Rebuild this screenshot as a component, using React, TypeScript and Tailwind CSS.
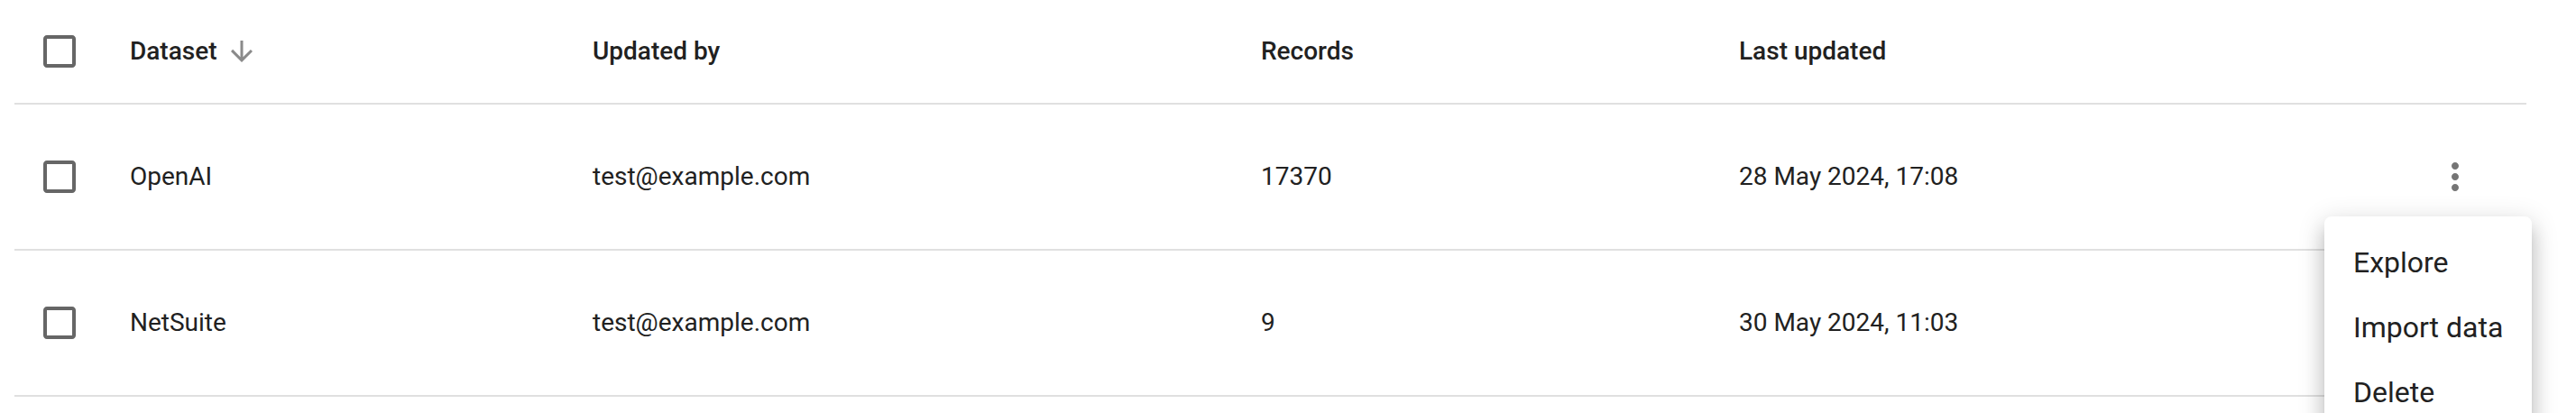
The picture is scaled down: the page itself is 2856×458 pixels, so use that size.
import React from "react";

type Row = { name: string; by: string; records: string; updated: string };

const rows: Row[] = [
  { name: "OpenAI", by: "test@example.com", records: "17370", updated: "28 May 2024, 17:08" },
  { name: "NetSuite", by: "test@example.com", records: "9", updated: "30 May 2024, 11:03" },
];

const CheckboxIcon = () => (
  <svg width="48" height="48" viewBox="0 0 24 24" fill="#666666">
    <path d="M19 5v14H5V5h14m0-2H5c-1.1 0-2 .9-2 2v14c0 1.1.9 2 2 2h14c1.1 0 2-.9 2-2V5c0-1.1-.9-2-2-2z" />
  </svg>
);

const ArrowDown = () => (
  <svg width="36" height="36" viewBox="0 0 24 24" fill="#8a8a8a">
    <path d="M20 12l-1.41-1.41L13 16.17V4h-2v12.17l-5.58-5.59L4 12l8 8 8-8z" />
  </svg>
);

const MoreVert = () => (
  <svg width="48" height="48" viewBox="0 0 24 24" fill="#757575">
    <path d="M12 8c1.1 0 2-.9 2-2s-.9-2-2-2-2 .9-2 2 .9 2 2 2zm0 2c-1.1 0-2 .9-2 2s.9 2 2 2 2-.9 2-2-.9-2-2-2zm0 6c-1.1 0-2 .9-2 2s.9 2 2 2 2-.9 2-2-.9-2-2-2z" />
  </svg>
);

const App = () => {
  return (
    <div
      className="relative h-[458px] w-full overflow-hidden bg-white"
      style={{ fontFamily: "Roboto, 'Noto Sans', sans-serif" }}
    >
      <div className="ml-[16px] w-[2785px]">
        {/* header */}
        <div className="flex h-[116px] items-center border-b-2 border-[#e0e0e0] text-[28px] font-medium text-[#212121]">
          <div className="flex w-[96px] items-center pl-[26px]">
            <CheckboxIcon />
          </div>
          <div className="flex w-[513px] items-center pl-[32px]">
            <span>Dataset</span>
            <span className="ml-[9px] flex">
              <ArrowDown />
            </span>
          </div>
          <div className="w-[741px] pl-[32px]">Updated by</div>
          <div className="w-[530px] pl-[32px]">Records</div>
          <div className="flex-1 pl-[32px]">Last updated</div>
        </div>

        {/* body */}
        {rows.map((r) => (
          <div
            key={r.name}
            className="flex h-[162px] items-center border-b-2 border-[#e0e0e0] text-[28px] text-[#212121]"
          >
            <div className="flex w-[96px] items-center pl-[26px]">
              <CheckboxIcon />
            </div>
            <div className="w-[513px] pl-[32px]">{r.name}</div>
            <div className="w-[741px] pl-[32px]">{r.by}</div>
            <div className="w-[530px] pl-[32px]">{r.records}</div>
            <div className="flex-1 pl-[32px]">{r.updated}</div>
            <div className="flex w-[119px] justify-start">
              <button className="flex h-[80px] w-[80px] items-center justify-center rounded-full">
                <MoreVert />
              </button>
            </div>
          </div>
        ))}
      </div>

      {/* row actions menu */}
      <div className="absolute left-[2577px] top-[240px] rounded-[8px] bg-white pt-[15px] pb-[16px] shadow-[0px_10px_10px_-6px_rgba(0,0,0,0.2),0px_16px_20px_2px_rgba(0,0,0,0.14),0px_6px_28px_4px_rgba(0,0,0,0.12)]">
        {["Explore", "Import data", "Delete"].map((item) => (
          <div
            key={item}
            className="flex h-[72px] items-center px-[32px] text-[32px] leading-[48px] text-[#212121]"
          >
            {item}
          </div>
        ))}
      </div>
    </div>
  );
};

export default App;
